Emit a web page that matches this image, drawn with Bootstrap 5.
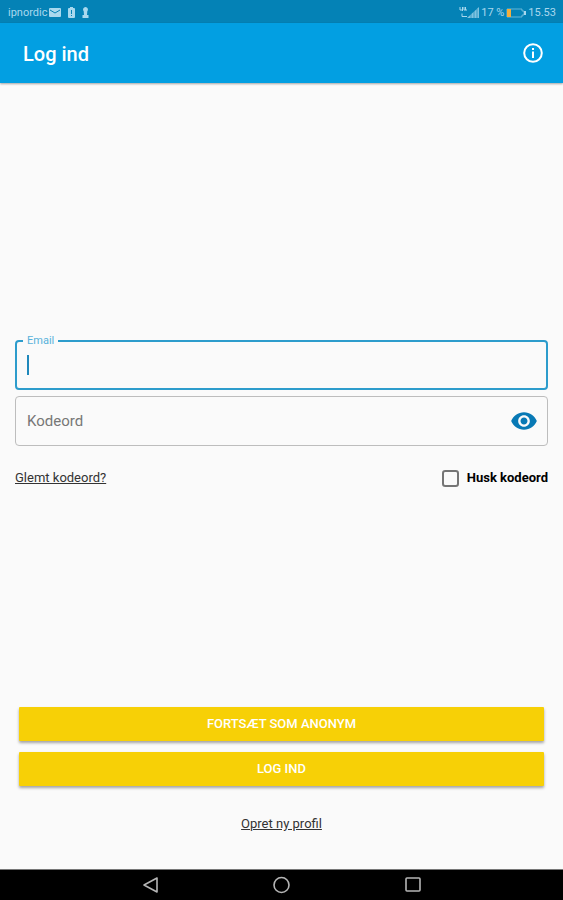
<!DOCTYPE html>
<html lang="da">
<head>
<meta charset="utf-8">
<meta name="viewport" content="width=device-width, initial-scale=1">
<title>Log ind</title>
<link href="https://cdn.jsdelivr.net/npm/bootstrap@5.3.0/dist/css/bootstrap.min.css" rel="stylesheet">
<style>
body { font-family: Roboto, "Noto Sans", sans-serif; background: #fafafa; color: #222; font-size: 13px; line-height: 18px; }
svg { display: block; flex: none; }
.status-bar { background: #0482b6; color: #a9d8ee; height: 23px; font-size: 11px; padding: 2px 7px 0 8px; }
.status-group { gap: 2px; }
.notice-icons { gap: 7px; }
.app-bar { background: #029fe2; height: 60px; padding: 0 20px 0 23px; box-shadow: 0 1px 2px rgba(0,0,0,.35); }
.app-title { font-size: 20px; line-height: 24px; font-weight: 500; padding-top: 2px; }
.page-body { padding: 37px 15px 36px; }
.field-stack { gap: 6px; }
.field-input { height: 50px; border-radius: 4px; padding: 0 11px; font-size: 15px; background: transparent; border: 1px solid #bdbdbd; }
.field-input::placeholder { color: #777; opacity: 1; }
.field-input:focus { background: transparent; box-shadow: none; border-color: #2d9ccc; }
.field-active, .field-active:focus { border: 2px solid #2d9ccc; caret-color: transparent; }
.field-label { position: absolute; top: -7px; left: 8px; padding: 0 4px; background: #fafafa; color: #58b2da; font-size: 11px; line-height: 16px; }
.text-cursor { position: absolute; left: 12px; top: 15px; width: 2px; height: 20px; background: #1f88bb; }
.eye-btn { position: absolute; right: 10px; top: 11px; color: #0879b5; }
.options-row { padding-top: 23px; }
.remember-box { width: 17px; height: 17px; margin: 0; border: 2px solid #757575; border-radius: 2px; background-color: transparent; }
.plain-link { color: #333; }
.action-btn { height: 34px; background: #f7d006; color: #fff; border-radius: 1px; font-size: 13px; line-height: 18px; font-weight: 500; box-shadow: 0 2px 3px rgba(0,0,0,.35); }
.action-btn:hover { background: #eac400; color: #fff; }
.actions { gap: 11px; padding: 0 4px; }
.signup-row { padding-top: 18px; }
.nav-keys { background: #000; height: 31px; color: #b5b5b5; border-top: 1px solid #777; padding: 0 84px; }
</style>
<script src="https://cdn.jsdelivr.net/npm/bootstrap@5.3.0/dist/js/bootstrap.bundle.min.js"></script>
</head>
<body class="d-flex flex-column min-vh-100">
<div class="status-bar d-flex justify-content-between align-items-center">
  <div class="status-group d-flex align-items-center">
    <span>ipnordic</span>
    <div class="notice-icons d-flex align-items-center">
      <svg width="12" height="9" viewBox="0 0 12 9"><rect width="12" height="9" rx="1" fill="currentColor"/><path d="M1 2l5 3 5-3" fill="none" stroke="#0482b6"/></svg>
      <svg width="7" height="11" viewBox="0 0 7 11"><path d="M2 0h3v1h1q1 0 1 1v8q0 1-1 1H1q-1 0-1-1V2q0-1 1-1h1z" fill="currentColor"/><path d="M3.500 3v4M3.500 8v1" stroke="#0482b6"/></svg>
      <svg width="7" height="11" viewBox="0 0 7 11"><path d="M3.500 0a2.500 2.500 0 0 1 1.800 4.200L5 8h1.500v3h-6V8H2L1.700 4.200A2.500 2.500 0 0 1 3.500 0z" fill="currentColor"/></svg>
    </div>
  </div>
  <div class="status-group d-flex align-items-center">
    <svg width="20" height="13" viewBox="0 0 20 13"><path d="M1 1v3h2.500M3.500 1v4M5 1v3h3M6.500 1v3M3 7.500v3h5" fill="none" stroke="currentColor"/><path d="M8 12L20 1v11z" fill="currentColor" opacity=".75"/><path d="M12 12V8M15 12V5M18 12V3" stroke="#0482b6" stroke-width=".6"/></svg>
    <span>17 %</span>
    <svg width="20" height="10" viewBox="0 0 20 10"><path d="M1 1h15v2h2v4h-2v2H1z" fill="none" stroke="currentColor" opacity=".6"/><path d="M1 1h4v8H1z" fill="#f3ae3c"/><path d="M18 3h2v4h-2z" fill="currentColor"/></svg>
    <span>15.53</span>
  </div>
</div>
<header class="app-bar d-flex justify-content-between align-items-center text-white">
  <h1 class="app-title m-0">Log ind</h1>
  <button type="button" class="btn p-0 border-0 text-white" aria-label="Information">
    <svg width="20" height="20" viewBox="0 0 20 20"><circle cx="10" cy="10" r="8.800" fill="none" stroke="currentColor" stroke-width="2"/><path d="M9 5h2v2H9zM9 8.500h2V15H9z" fill="currentColor"/></svg>
  </button>
</header>
<main class="page-body d-flex flex-column flex-grow-1">
  <form id="login" class="my-auto">
    <div class="field-stack d-flex flex-column">
      <div class="position-relative">
        <input type="email" id="email" class="form-control field-input field-active">
        <label for="email" class="field-label">Email</label>
        <span class="text-cursor"></span>
      </div>
      <div class="position-relative">
        <input type="password" id="password" class="form-control field-input" placeholder="Kodeord" aria-label="Kodeord">
        <button type="button" class="btn p-0 border-0 eye-btn" aria-label="Vis kodeord">
          <svg width="28" height="28" viewBox="0 0 24 24"><path fill="currentColor" d="M12 4.500C7 4.500 2.730 7.610 1 12c1.730 4.390 6 7.500 11 7.500s9.270-3.110 11-7.500c-1.730-4.390-6-7.500-11-7.500zM12 17c-2.760 0-5-2.240-5-5s2.240-5 5-5 5 2.240 5 5-2.240 5-5 5zm0-8c-1.660 0-3 1.340-3 3s1.340 3 3 3 3-1.340 3-3-1.340-3-3-3z"/></svg>
        </button>
      </div>
    </div>
    <div class="options-row d-flex justify-content-between align-items-center">
      <a href="#" class="plain-link">Glemt kodeord?</a>
      <div class="d-flex align-items-center gap-2">
        <input type="checkbox" id="remember" class="form-check-input remember-box">
        <label for="remember" class="fw-bold text-black">Husk kodeord</label>
      </div>
    </div>
  </form>
  <div class="actions d-flex flex-column">
    <button type="button" class="btn action-btn border-0 p-0">FORTSÆT SOM ANONYM</button>
    <button type="submit" form="login" class="btn action-btn border-0 p-0">LOG IND</button>
    <div class="signup-row text-center"><a href="#" class="plain-link">Opret ny profil</a></div>
  </div>
</main>
<nav class="nav-keys d-flex justify-content-around align-items-center" aria-label="System">
  <button type="button" class="btn p-0 border-0 text-reset" aria-label="Tilbage"><svg width="18" height="18" viewBox="0 0 18 18"><path d="M16 2v14L3 9z" fill="none" stroke="currentColor" stroke-width="1.600" stroke-linejoin="round"/></svg></button>
  <button type="button" class="btn p-0 border-0 text-reset" aria-label="Hjem"><svg width="18" height="18" viewBox="0 0 18 18"><circle cx="9.500" cy="9" r="7.500" fill="none" stroke="currentColor" stroke-width="1.600"/></svg></button>
  <button type="button" class="btn p-0 border-0 text-reset" aria-label="Seneste"><svg width="18" height="18" viewBox="0 0 18 18"><rect x="2" y="2" width="14" height="13" rx="1" fill="none" stroke="currentColor" stroke-width="1.600"/></svg></button>
</nav>
</body>
</html>
